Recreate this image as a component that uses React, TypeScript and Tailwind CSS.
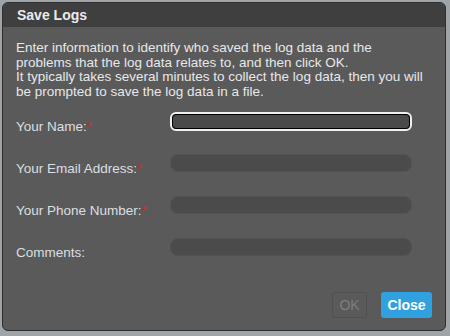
export default function App() {
  const fields = [
    { label: "Your Name:", required: true, focused: true },
    { label: "Your Email Address:", required: true },
    { label: "Your Phone Number:", required: true },
    { label: "Comments:", required: false },
  ];

  return (
    <div className="h-[336px] w-[450px] bg-[#9ea4a8] p-[2px] pr-[4px] pb-[5px] font-['Liberation_Sans',Arial,sans-serif]">
      <div className="flex h-full flex-col overflow-hidden rounded-[6px] border border-[#2e2e2e] bg-[#5a5a5a]">
        {/* Header */}
        <div className="flex h-[24px] shrink-0 items-center bg-[#3f3f3f] pl-[14px] text-[14px] font-bold text-[#e8eaee]">
          Save Logs
        </div>

        {/* Body */}
        <div className="flex flex-1 flex-col px-[13px] pt-[14px]">
          <p className="whitespace-nowrap text-[13.5px] leading-[14.7px] text-[#e6e8ea]">
            Enter information to identify who saved the log data and the
            <br />
            problems that the log data relates to, and then click OK.
            <br />
            It typically takes several minutes to collect the log data, then you will
            <br />
            be prompted to save the log data in a file.
          </p>

          <div className="mt-[12px] flex flex-col gap-[23px]">
            {fields.map((f) => (
              <div key={f.label} className="flex h-[19px] items-center">
                <label className="w-[154px] pt-[11px] text-[13.5px] text-[#dcdfe2]">
                  {f.label}
                  {f.required && <span className="text-[#e02020]">*</span>}
                </label>
                <input
                  className={
                    f.focused
                      ? "h-[19px] w-[242px] rounded-[6px] border-2 border-[#f0f0f0] bg-[#4a4a4a] outline outline-1 -outline-offset-3 outline-black"
                      : "h-[18px] w-[242px] rounded-[8px] border border-[#525252] bg-[#4b4b4b] outline-none"
                  }
                />
              </div>
            ))}
          </div>

          <div className="mt-auto mb-[12px] flex justify-end gap-[14px] pr-[0px]">
            <button className="h-[26px] w-[35px] rounded-[3px] border border-[#505050] text-[14px] text-[#7e7e7e]">
              OK
            </button>
            <button className="h-[26px] w-[51px] rounded-[3px] bg-[#2ea1de] text-[14px] font-bold text-white">
              Close
            </button>
          </div>
        </div>
      </div>
    </div>
  );
}
